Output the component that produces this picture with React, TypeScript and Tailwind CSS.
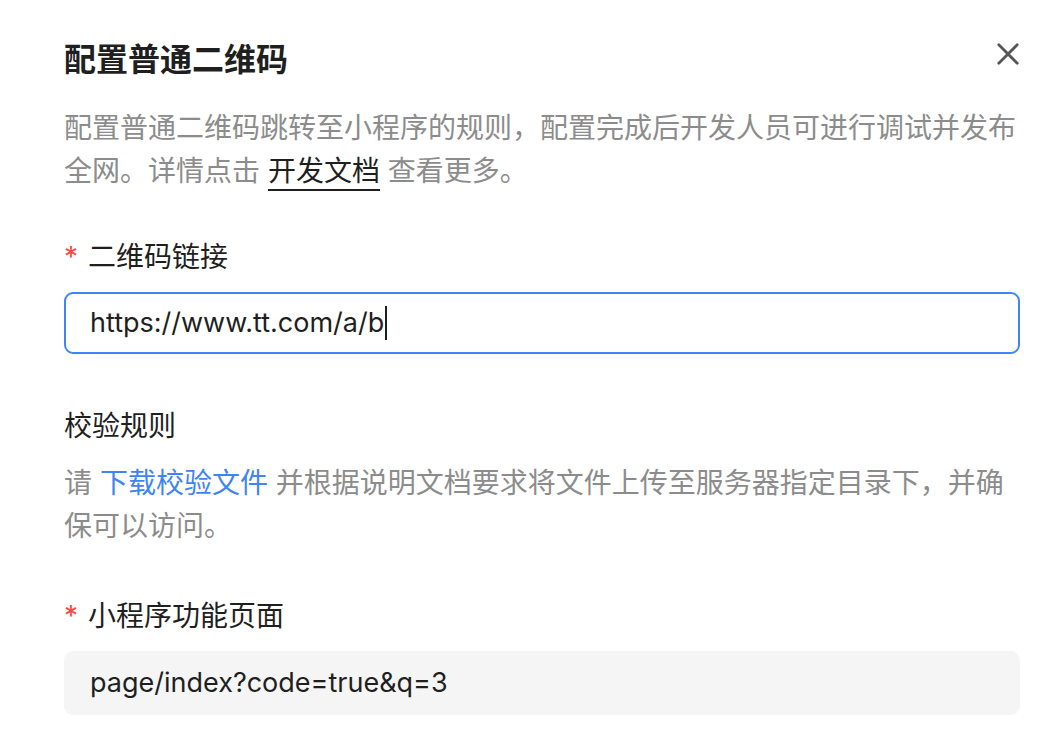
import React from "react";

export default function App() {
  const font = { fontFamily: '"Inter", "Noto Sans CJK SC", sans-serif' };
  return (
    <div className="w-[1056px] h-[740px] bg-white overflow-hidden" style={font}>
      <div className="pl-[64px] pr-[36px] pt-[40px]">
        <div className="flex justify-between items-start">
          <h1 className="text-[32px] leading-[40px] font-bold text-[#1f1f1f]">配置普通二维码</h1>
          <button className="mt-[2px] w-[24px] h-[24px] flex items-center justify-center">
            <svg width="22" height="22" viewBox="0 0 22 22">
              <path d="M1.8 1.8 L20.2 20.2 M20.2 1.8 L1.8 20.2" stroke="#555555" strokeWidth="2.8" strokeLinecap="round" />
            </svg>
          </button>
        </div>

        <p className="mt-[27px] text-[28px] leading-[43px] text-[#8c8c8c]">
          配置普通二维码跳转至小程序的规则，配置完成后开发人员可进行调试并发布全网。详情点击{" "}
          <span className="text-[#1f1f1f] border-b-2 border-[#1f1f1f] pb-[1px]">开发文档</span> 查看更多。
        </p>

        <div className="mt-[44px] flex items-center text-[28px] leading-[40px] text-[#1f1f1f]">
          <span className="text-[#f54a45] mr-[10px] text-[28px]">*</span>
          <span>二维码链接</span>
        </div>

        <div className="mt-[15px] h-[62px] rounded-[9px] border-2 border-[#3d85f5] flex items-center pl-[24px]">
          <span className="text-[27px] leading-[40px] text-[#1f1f1f]">https://www.tt.com/a/b</span>
          <span className="inline-block w-[2px] h-[34px] bg-[#1f1f1f] ml-[1px]" />
        </div>

        <div className="mt-[52px] text-[28px] leading-[40px] text-[#1f1f1f]">校验规则</div>

        <p className="mt-[16px] text-[28px] leading-[43px] text-[#8c8c8c]">
          请 <span className="text-[#3d85f5]">下载校验文件</span> 并根据说明文档要求将文件上传至服务器指定目录下，并确保可以访问。
        </p>

        <div className="mt-[48px] flex items-center text-[28px] leading-[40px] text-[#1f1f1f]">
          <span className="text-[#f54a45] mr-[10px] text-[28px]">*</span>
          <span>小程序功能页面</span>
        </div>

        <div className="mt-[15px] h-[64px] rounded-[9px] bg-[#f5f5f5] flex items-center pl-[26px]">
          <span className="text-[27px] leading-[40px] text-[#1f1f1f]">page/index?code=true&amp;q=3</span>
        </div>
      </div>
    </div>
  );
}
